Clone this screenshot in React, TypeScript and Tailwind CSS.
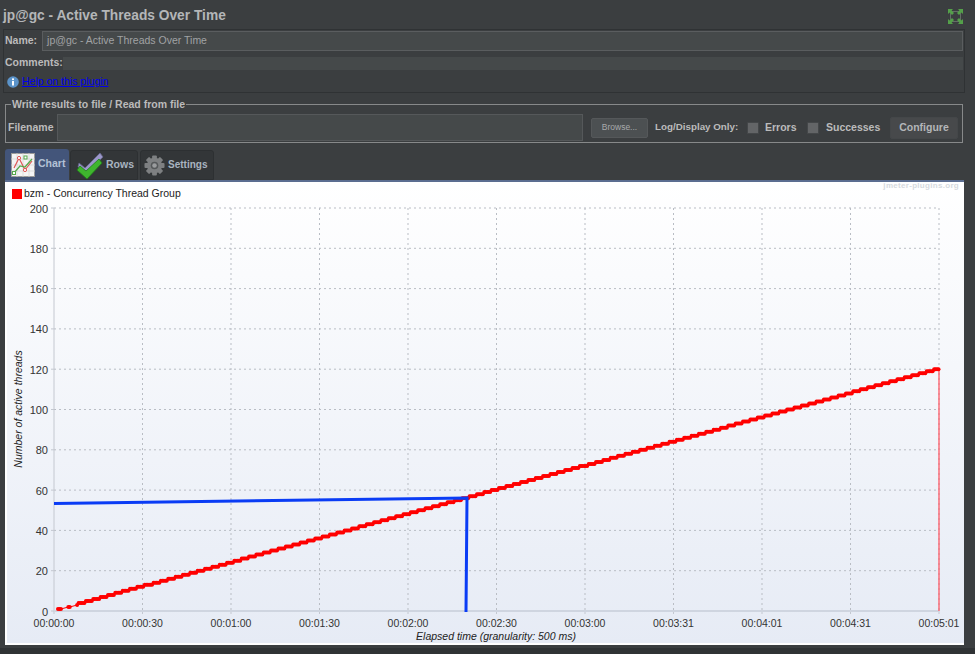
import React from "react";

const xLabels = ["00:00:00", "00:00:30", "00:01:00", "00:01:30", "00:02:00", "00:02:30", "00:03:00", "00:03:31", "00:04:01", "00:04:31", "00:05:01"];
const yLabels = [0, 20, 40, 60, 80, 100, 120, 140, 160, 180, 200];

const plotLeft = 54;
const plotRight = 939;
const plotTop = 208;
const plotBottom = 611;

const xAt = (i: number) => plotLeft + ((plotRight - plotLeft) * i) / 10;
const yAt = (v: number) => plotBottom - ((plotBottom - plotTop) * v) / 200;

// One sample every 500 ms, the thread count rises by one about every 2.5 s
const samples = () => {
  const pts: { x: number; y: number }[] = [];
  for (let x = 58; x <= 939; x += 1.47) {
    if (x < 80 && Math.floor((x - 58) / 1.47) % 6 > 1) continue;
    const v = Math.max(1, Math.round((x - plotLeft) / 7.375 + 0.2));
    pts.push({ x, y: yAt(Math.min(v, 120)) });
  }
  return pts;
};

const ChartIcon = () => (
  <svg width="24" height="24" viewBox="0 0 24 24" className="shrink-0">
    <rect x="0.5" y="0.5" width="23" height="23" fill="#f4f4f4" stroke="#9a9a9a" />
    <path d="M0 6h24M0 12h24M0 18h24M6 0v24M12 0v24M18 0v24" stroke="#d4d4d4" strokeWidth="0.7" />
    <path d="M3 15L8 5l6 12 7-9" fill="none" stroke="#e05555" strokeWidth="1.2" />
    <path d="M3 20l6-7 5 1 7-8" fill="none" stroke="#55a84a" strokeWidth="1.2" />
    <rect x="1.5" y="18.5" width="3" height="3" fill="#fff" stroke="#55a84a" />
    <rect x="13" y="3" width="3" height="3" fill="#fff" stroke="#55a84a" />
    <circle cx="8" cy="5" r="1.6" fill="#fff" stroke="#e05555" />
    <circle cx="14" cy="17" r="1.6" fill="#fff" stroke="#e05555" />
  </svg>
);

const RowsIcon = () => (
  <svg width="28" height="29" viewBox="0 0 28 29" className="shrink-0">
    <path d="M3 12l6 5L24 2l3 4-17 16-8-6z" fill="#9b97c9" stroke="#66648c" strokeWidth="0.8" />
    <path d="M1 19l3-4 6 5L23 8l3 4-15 16z" fill="#3fb52e" stroke="#1f7d18" strokeWidth="0.8" />
  </svg>
);

const GearIcon = () => (
  <svg width="21" height="21" viewBox="0 0 22 22" className="shrink-0">
    <g fill="#7e8082">
      {[0, 45, 90, 135, 180, 225, 270, 315].map((a) => (
        <rect key={a} x="8.5" y="0.5" width="5" height="5" rx="1" transform={`rotate(${a} 11 11)`} />
      ))}
      <circle cx="11" cy="11" r="8" />
    </g>
    <circle cx="11" cy="11" r="4" fill="#55585a" />
    <circle cx="11" cy="11" r="2.4" fill="#9a9c9e" />
  </svg>
);

const ExpandIcon = () => (
  <svg width="15" height="15" viewBox="0 0 15 15">
    <rect x="2.5" y="2.5" width="10" height="10" fill="none" stroke="#6f7a70" strokeWidth="0.8" />
    <path d="M0 0h5L3.6 1.6 6 4 4 6 1.6 3.6 0 5z" fill="#54a04a" />
    <path d="M15 0h-5l1.4 1.6L9 4l2 2 2.4-2.4L15 5z" fill="#54a04a" />
    <path d="M0 15h5l-1.4-1.6L6 11 4 9l-2.4 2.4L0 10z" fill="#54a04a" />
    <path d="M15 15h-5l1.4-1.6L9 11l2-2 2.4 2.4L15 10z" fill="#54a04a" />
  </svg>
);

const InfoIcon = () => (
  <svg width="12" height="12" viewBox="0 0 12 12" className="shrink-0">
    <circle cx="6" cy="6" r="5.8" fill="#5b93c9" />
    <rect x="5" y="5" width="2" height="4.5" fill="#fff" />
    <rect x="5" y="2.4" width="2" height="1.7" fill="#fff" />
  </svg>
);

const Chart = () => {
  const pts = samples();
  return (
    <div className="relative ml-[5px] mr-[11px] h-[465px] shrink-0 bg-linear-to-b from-white to-[#e6ebf5] border-t-2 border-[#5b6d90] shadow-[inset_0_-2px_0_#fff,inset_2px_0_0_#fff]">
      <div className="flex h-[21px] items-center gap-[2px] pl-[7px] pt-[2px] text-[10.5px] text-[#222]">
        <span className="w-[10px] h-[10px] bg-[#ff0000]" />
        <span>bzm - Concurrency Thread Group</span>
      </div>
      <span className="absolute right-[5px] top-[-2px] text-[8px] font-bold tracking-[0.3px] text-[#d6dade]">jmeter-plugins.org</span>
      <svg width="959" height="442" viewBox="5 203 959 442" className="block">
        {yLabels.map((v) => (
          <g key={v}>
            {v > 0 && <line x1={plotLeft} x2={plotRight} y1={yAt(v)} y2={yAt(v)} stroke="#b9bdc4" strokeDasharray="2 3" />}
            <line x1={plotLeft - 3} x2={plotLeft} y1={yAt(v)} y2={yAt(v)} stroke="#c4c8d0" />
            <text x={48} y={yAt(v) + 4.5} textAnchor="end" fontSize="11" fill="#333">{v}</text>
          </g>
        ))}
        {xLabels.map((t, i) => (
          <g key={t}>
            {i > 0 && <line x1={xAt(i)} x2={xAt(i)} y1={plotTop} y2={plotBottom} stroke="#b9bdc4" strokeDasharray="2 3" />}
            <line x1={xAt(i)} x2={xAt(i)} y1={plotBottom} y2={plotBottom + 3} stroke="#c4c8d0" />
            <text x={xAt(i)} y={627} textAnchor="middle" fontSize="10.5" fill="#333">{t}</text>
          </g>
        ))}
        <line x1={plotLeft} x2={plotLeft} y1={plotTop} y2={plotBottom} stroke="#c4c8d0" />
        <line x1={plotLeft} x2={plotRight} y1={plotBottom} y2={plotBottom} stroke="#cfd5e0" strokeWidth="2" />
        <text x={496} y={640} textAnchor="middle" fontSize="10.5" fontStyle="italic" fill="#222">Elapsed time (granularity: 500 ms)</text>
        <text transform="translate(22 409) rotate(-90)" textAnchor="middle" fontSize="10.5" fontStyle="italic" fill="#222">Number of active threads</text>
        <line x1={939} x2={939} y1={368} y2={611} stroke="#ff4d5a" strokeWidth="1.2" />
        <polyline points={pts.map((p) => `${p.x.toFixed(1)},${p.y.toFixed(1)}`).join(" ")} fill="none" stroke="#ff0000" strokeWidth="1" />
        {pts.map((p) => (
          <circle key={p.x} cx={p.x} cy={p.y} r="2" fill="#ff0000" />
        ))}
        <polyline points="54,503.5 467,498 466,612" fill="none" stroke="#0a3cf5" strokeWidth="3" />
      </svg>
    </div>
  );
};

export default function App() {
  return (
    <div className="w-[975px] h-[654px] overflow-hidden bg-[#3b3e40] flex flex-col text-[#bbbbbb] [font-family:Liberation_Sans,Arial,sans-serif]">
      <div className="h-[29px] shrink-0 flex items-center justify-between pl-[3px] pr-[12px] pt-[3px]">
        <span className="pt-[1px] text-[13.75px] font-bold text-[#b4b6b8]">jp@gc - Active Threads Over Time</span>
        <ExpandIcon />
      </div>

      <div className="ml-[3px] mr-[10px] h-[64px] shrink-0 border border-[#2f3234] pl-[1px] pr-[1px] flex flex-col">
        <div className="h-[21px] flex items-center gap-[5px] pt-[1px]">
          <span className="text-[10.5px] font-bold">Name:</span>
          <div className="flex-1 h-[20px] bg-[#45494a] border border-[#5a5d5f] flex items-center pl-[4px] text-[10.5px] text-[#a0a2a4]">jp@gc - Active Threads Over Time</div>
        </div>
        <div className="h-[24px] flex items-center">
          <span className="text-[10.5px] font-bold">Comments:</span>
          <div className="flex-1 h-[13px] bg-[#45494a]" />
        </div>
        <div className="h-[14px] flex items-center gap-[3px] pl-[2px]">
          <InfoIcon />
          <span className="text-[10.5px] text-[#0000ee] underline">Help on this plugin</span>
        </div>
      </div>

      <fieldset className="ml-[5px] mr-[12px] mt-[5px] h-[45px] shrink-0 min-w-0 border border-[#87898a] pl-[2px] pr-[4px]">
        <legend className="ml-[3px] px-[1px] text-[10.5px] font-bold leading-[13px]">Write results to file / Read from file</legend>
        <div className="flex items-center whitespace-nowrap pt-[3px]">
          <span className="text-[10.5px] font-bold w-[49px]">Filename</span>
          <div className="w-[526px] h-[27px] bg-[#45494a] border border-[#55585a]" />
          <button className="ml-[8px] w-[57px] h-[20px] rounded-[2px] bg-[#4c5052] border border-[#55585a] text-[8.5px] text-[#a8aaac]">Browse...</button>
          <span className="ml-[7px] w-[83px] text-[9.8px] font-bold">Log/Display Only:</span>
          <span className="ml-[9px] w-[12px] h-[12px] rounded-[1px] bg-[#636567] border border-[#444749]" />
          <span className="ml-[6px] w-[31px] text-[10.5px] font-bold">Errors</span>
          <span className="ml-[11px] w-[12px] h-[12px] rounded-[1px] bg-[#636567] border border-[#444749]" />
          <span className="ml-[7px] w-[54px] text-[10.5px] font-bold">Successes</span>
          <button className="ml-[10px] w-[68px] h-[22px] rounded-[2px] bg-[#47494b] border border-[#444749] text-[10.5px] font-bold text-[#b4b6b8]">Configure</button>
        </div>
      </fieldset>

      <div className="mt-[6px] ml-[5px] h-[31px] shrink-0 flex items-end gap-[1px]">
        <div className="w-[64px] h-[31px] rounded-t-[3px] bg-[#43557a] flex items-center gap-[3px] pl-[6px] text-[10.5px] font-bold text-[#b4c2d6]">
          <ChartIcon />
          <span className="pb-[1px]">Chart</span>
        </div>
        <div className="w-[68px] h-[30px] rounded-t-[3px] bg-[#333638] border border-[#2d3032] flex items-center gap-[2px] pl-[5px] text-[10.5px] font-bold text-[#a9b4c0]">
          <RowsIcon />
          <span>Rows</span>
        </div>
        <div className="ml-[1px] w-[74px] h-[30px] rounded-t-[3px] bg-[#333638] border border-[#2d3032] flex items-center gap-[3px] pl-[3px] text-[10px] font-bold text-[#a9b4c0]">
          <GearIcon />
          <span className="pb-[1px]">Settings</span>
        </div>
      </div>

      <Chart />
      <div className="mt-[3px] flex-1 bg-[#303335]" />
    </div>
  );
}
